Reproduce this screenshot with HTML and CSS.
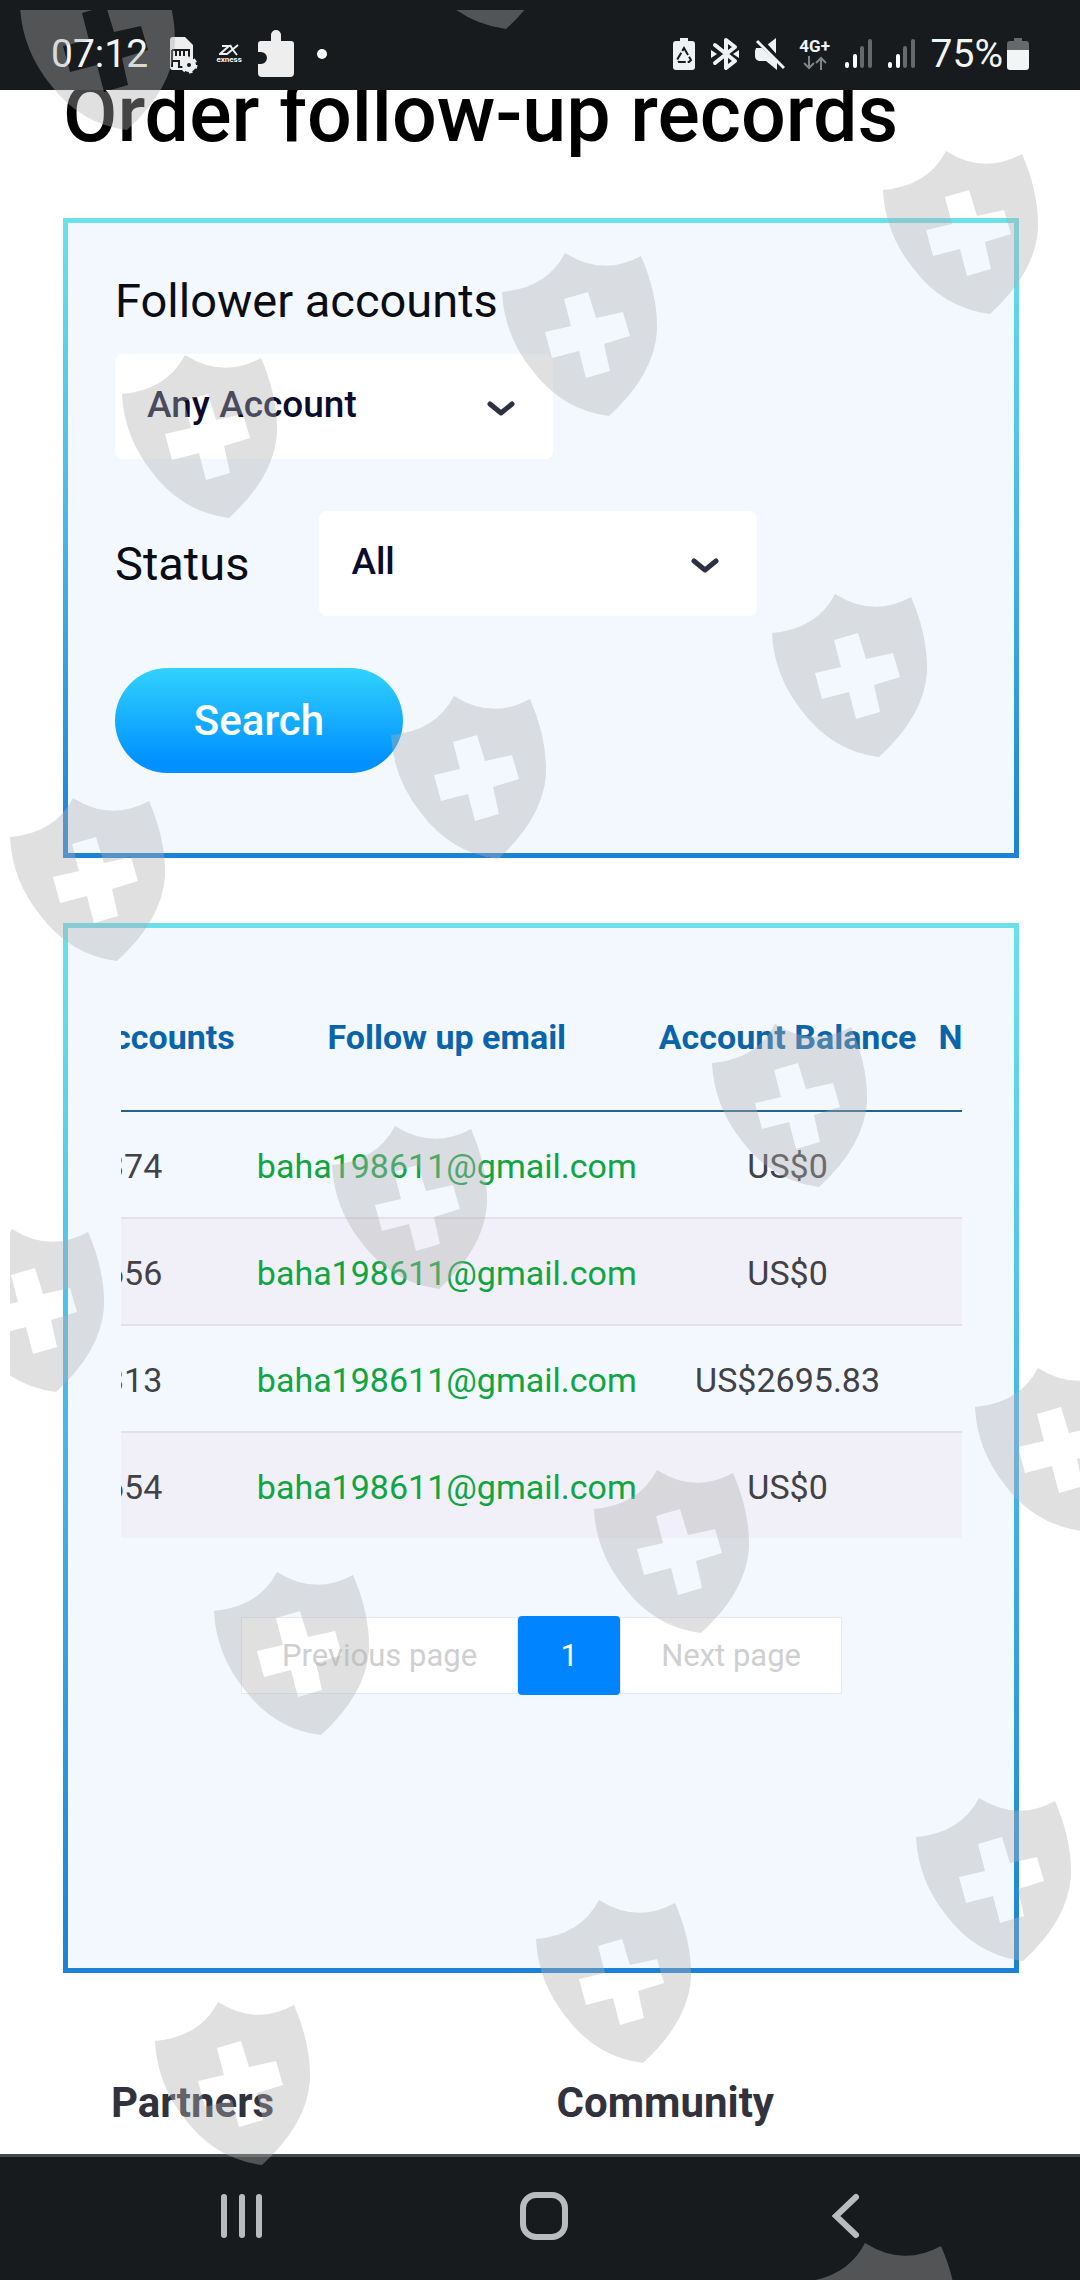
FILE: index.html
```html
<!DOCTYPE html>
<html lang="en">
<head>
    <meta charset="UTF-8">
    <meta name="viewport" content="width=device-width, initial-scale=1.0">
    <title>Order follow-up records</title>
    <link rel="stylesheet" href="styles.css">
</head>
<body>
<header class="status-bar">
    <div class="status-group">
        <span class="clock">07:12</span>
        <svg class="icon" width="36" height="48" viewBox="0 0 36 48">
            <path fill="#eee" d="M6 10q0-3 3-3h12l8 8v25H9q-3 0-3-3z"/>
            <path fill="none" stroke="#171b1e" stroke-width="2" d="M8 20h17v8M8 37V20M12 20v6M16 20v6M20 20v6M9 31h6v6h6"/>
            <g transform="translate(25 35)">
                <circle r="5" fill="none" stroke="#eee" stroke-width="4"/>
                <circle r="6" fill="none" stroke="#eee" stroke-width="5" stroke-dasharray="3 3.3"/>
                <circle r="2" fill="#171b1e"/>
            </g>
        </svg>
        <span class="exness">
            <svg width="20" height="12" viewBox="0 0 20 12"><path fill="none" stroke="#eee" stroke-width="2" d="M3 2h7L1 10h7L19 1M11 1l3 5 4 5"/></svg>
            exness
        </span>
        <svg class="icon" width="36" height="48" viewBox="0 0 36 48">
            <path fill="#eee" d="M3 11h10V5a5 5 0 0 1 10 0v6h10q3 0 3 3v29q0 4-4 4H4q-4 0-4-4V34h3a6 6 0 0 0 0-12H0v-8q0-3 3-3z"/>
        </svg>
        <svg class="icon" width="24" height="48" viewBox="0 0 24 48"><circle cx="12" cy="24" r="5" fill="#fff"/></svg>
    </div>
    <div class="status-group">
        <svg class="icon" width="22" height="48" viewBox="0 0 22 48">
            <path fill="#eef2f4" d="M7 8h8v3h4q3 0 3 3v23q0 3-3 3H3q-3 0-3-3V14q0-3 3-3h4z"/>
            <path fill="none" stroke="#171b1e" stroke-width="2" stroke-dasharray="8 2" d="M11 18l7 12-2 2H6l-2-2z"/>
        </svg>
        <svg class="icon" width="28" height="48" viewBox="0 0 28 48">
            <path fill="none" stroke="#eef2f4" stroke-width="4" stroke-linejoin="round" stroke-linecap="round" d="M4 15l20 16-9 7V10l9 7L4 33"/>
            <path fill="#eef2f4" d="M0 20l6 4-6 4zM28 20l-6 4 6 4z"/>
        </svg>
        <svg class="icon" width="30" height="48" viewBox="0 0 30 48">
            <path fill="#eef2f4" d="M1 18h6l15 14v8L11 31H4q-4-1-4-5v-5zM12 15l9-7v16z"/>
            <path stroke="#171b1e" stroke-width="3" d="M6 9l25 28"/>
            <path stroke="#eef2f4" stroke-width="3" d="M2 11l27 27"/>
        </svg>
        <span class="network">
            4G+
            <svg width="24" height="14" viewBox="0 0 24 14"><path fill="none" stroke="#7f8486" stroke-width="2" d="M6 0v12M1 7l5 5 5-5M18 14V2M13 7l5-5 5 5"/></svg>
        </span>
        <svg class="icon" width="27" height="48" viewBox="0 0 27 48" fill="none" stroke-width="4" stroke-linecap="round">
            <path stroke="#fff" d="M2 34v2M10 26v10"/><path stroke="#66696b" d="M17 18v18M25 11v25"/>
        </svg>
        <svg class="icon" width="27" height="48" viewBox="0 0 27 48" fill="none" stroke-width="4" stroke-linecap="round">
            <path stroke="#fff" d="M2 34v2M10 26v10"/><path stroke="#66696b" d="M17 18v18M25 11v25"/>
        </svg>
        <span class="battery">
            75%
            <svg width="22" height="48" viewBox="0 0 22 48">
                <path fill="#66696b" d="M7 8h8v3h4q3 0 3 3v8H0v-8q0-3 3-3h4z"/>
                <path fill="#f2f5f6" d="M0 20h22v17q0 3-3 3H3q-3 0-3-3z"/>
            </svg>
        </span>
    </div>
</header>

<main class="page">
    <h1>Order follow-up records</h1>

    <form class="panel filters">
        <div class="field">
            <label for="account">Follower accounts</label>
            <div class="select">
                <select id="account"><option>Any Account</option></select>
                <svg width="28" height="16" viewBox="0 0 28 16"><path d="M3 3l11 9 11-9"/></svg>
            </div>
        </div>
        <div class="field field-inline">
            <label for="status">Status</label>
            <div class="select">
                <select id="status"><option>All</option></select>
                <svg width="28" height="16" viewBox="0 0 28 16"><path d="M3 3l11 9 11-9"/></svg>
            </div>
        </div>
        <button type="button" class="search">Search</button>
    </form>

    <section class="panel records">
        <div class="table-scroll">
            <table>
                <thead>
                    <tr><th>Follower accounts</th><th>Follow up email</th><th>Account Balance</th><th>Net worth</th></tr>
                </thead>
                <tbody>
                    <tr><td>2104374</td><td class="email">baha198611@gmail.com</td><td>US$0</td><td></td></tr>
                    <tr><td>2104656</td><td class="email">baha198611@gmail.com</td><td>US$0</td><td></td></tr>
                    <tr><td>2104313</td><td class="email">baha198611@gmail.com</td><td>US$2695.83</td><td></td></tr>
                    <tr><td>2104654</td><td class="email">baha198611@gmail.com</td><td>US$0</td><td></td></tr>
                </tbody>
            </table>
        </div>
        <nav class="pagination">
            <button type="button" disabled>Previous page</button>
            <button type="button" class="current">1</button>
            <button type="button" disabled>Next page</button>
        </nav>
    </section>

    <footer class="footer">
        <h2>Partners</h2>
        <h2>Community</h2>
    </footer>
</main>

<nav class="nav-bar">
    <button type="button" aria-label="Recents"><svg width="48" height="48" viewBox="0 0 48 48"><path d="M6 5v38M24 5v38M41 5v38"/></svg></button>
    <button type="button" aria-label="Home"><svg width="48" height="48" viewBox="0 0 48 48"><rect x="3" y="3" width="42" height="42" rx="13"/></svg></button>
    <button type="button" aria-label="Back"><svg width="48" height="48" viewBox="0 0 48 48"><path d="M34 5L14 24l20 19"/></svg></button>
</nav>

<!-- shield watermark over the whole screen -->
<svg class="watermark" aria-hidden="true">
    <defs>
        <path id="shield" fill-rule="evenodd" d="M0 39Q45 35 63 0Q101 24 139 3Q156 42 155 78Q152 122 107 163Q60 157 30 117Q2 82 0 39z
            M62 46L86 39L94 65L121 59L128 83L102 91L108 118L84 125L77 98L50 105L43 79L69 73z"/>
    </defs>
    <use href="#shield" x="10" y="-43"/>
    <use href="#shield" x="389" y="-144"/>
    <use href="#shield" x="873" y="141"/>
    <use href="#shield" x="492" y="243"/>
    <use href="#shield" x="112" y="345"/>
    <use href="#shield" x="762" y="584"/>
    <use href="#shield" x="381" y="686"/>
    <use href="#shield" x="0" y="788"/>
    <use href="#shield" x="702" y="1014"/>
    <use href="#shield" x="322" y="1116"/>
    <use href="#shield" x="-61" y="1219"/>
    <use href="#shield" x="965" y="1358"/>
    <use href="#shield" x="584" y="1460"/>
    <use href="#shield" x="204" y="1562"/>
    <use href="#shield" x="906" y="1788"/>
    <use href="#shield" x="526" y="1890"/>
    <use href="#shield" x="145" y="1992"/>
    <use href="#shield" x="792" y="2233"/>
</svg>
</body>
</html>
```

FILE: styles.css
```css
* {
    box-sizing: border-box;
}

body {
    position: relative;
    display: flex;
    flex-direction: column;
    min-height: 100vh;
    margin: 0;
    background-color: #fff;
    color: #0b0d14;
    font-family: Roboto, "Liberation Sans", sans-serif;
}

button, select {
    font-family: inherit;
    border: none;
}

svg {
    display: block;
    flex-shrink: 0;
}

.status-bar {
    display: flex;
    justify-content: space-between;
    align-items: center;
    height: 90px;
    padding: 18px 51px 0;
    background-color: #171b1e;
    color: #f2f5f6;
    font-size: 39px;
    line-height: 48px;
}

.status-group {
    display: flex;
    align-items: center;
    gap: 16px;
}

.exness {
    display: flex;
    flex-direction: column;
    align-items: center;
    width: 26px;
    font-size: 8px;
    font-weight: bold;
    line-height: 8px;
}

.network {
    display: flex;
    flex-direction: column;
    align-items: center;
    gap: 2px;
    width: 28px;
    font-size: 17px;
    font-weight: bold;
    line-height: 16px;
}

.battery {
    display: flex;
    gap: 4px;
}

.page {
    flex: 1;
    overflow: hidden;
}

h1 {
    margin: -23px 63px 57px;
    color: #000;
    font-size: 79px;
    font-weight: 500;
    line-height: 94px;
    white-space: nowrap;
}

.panel {
    margin: 0 61px 65px 63px;
    border: 5px solid #45aee4;
    border-image: linear-gradient(#6be0ea, #48b4ea 50%, #1b82d6) 1;
    background-color: #f3f8ff;
}

.filters {
    display: flex;
    flex-direction: column;
    align-items: flex-start;
    gap: 52px;
    padding: 50px 47px 80px;
}

.field {
    display: flex;
    flex-direction: column;
    gap: 25px;
    font-size: 47px;
    line-height: 56px;
}

.field-inline {
    flex-direction: row;
    align-items: center;
    gap: 70px;
}

.select {
    position: relative;
    width: 438px;
}

.select select {
    display: block;
    width: 100%;
    height: 105px;
    padding: 0 32px 4px;
    border-radius: 8px;
    background-color: #fff;
    color: #0b0b2c;
    font-size: 37px;
    font-weight: 500;
    appearance: none;
}

.select svg {
    position: absolute;
    top: 47px;
    right: 38px;
    fill: none;
    stroke: #2d2f42;
    stroke-width: 5;
    stroke-linecap: round;
    stroke-linejoin: round;
    pointer-events: none;
}

.search {
    width: 288px;
    height: 105px;
    border-radius: 53px;
    background: linear-gradient(#31d2ff, #0090ff 90%);
    color: #fff;
    font-size: 42px;
    font-weight: 500;
}

.records {
    margin-bottom: 106px;
    padding: 36px 52px 273px 53px;
}

.table-scroll {
    overflow: hidden;
}

/* scrolled sideways, first column is partly out of view */
table {
    margin-left: -176px;
    border-collapse: collapse;
    color: #414146;
    font-size: 34px;
    line-height: 40px;
    white-space: nowrap;
}

th, td {
    padding: 34px 11px 31px;
    border-bottom: 2px solid #e3e0ea;
    text-align: center;
}

th {
    padding: 53px 11px;
    border-bottom-color: #22648c;
    color: #0a64ab;
    font-weight: bold;
}

tbody tr:nth-child(even) {
    background-color: #f1f0f9;
}

tbody tr:last-child td {
    border-bottom: none;
}

.email {
    color: #0fa541;
}

.pagination {
    display: flex;
    justify-content: center;
    align-items: center;
    margin-top: 78px;
}

.pagination button {
    height: 77px;
    padding: 0 40px;
    border: 1px solid #e6e8ec;
    background-color: #fff;
    color: #cfcfcf;
    font-size: 31px;
}

.pagination .current {
    width: 102px;
    height: 79px;
    border: none;
    border-radius: 4px;
    background-color: #0084ff;
    color: #fff;
}

.footer {
    display: grid;
    grid-template-columns: 1fr 1fr;
    padding: 0 78px 27px 111px;
}

.footer h2 {
    margin: 0;
    color: #32323f;
    font-size: 42px;
    font-weight: bold;
    line-height: 48px;
}

.nav-bar {
    display: flex;
    justify-content: center;
    align-items: center;
    gap: 254px;
    height: 126px;
    padding-left: 8px;
    padding-bottom: 6px;
    border-top: 3px solid #434a48;
    background-color: #171b1e;
}

.nav-bar button {
    padding: 0;
    background: none;
}

.nav-bar svg {
    fill: none;
    stroke: #b8bcbe;
    stroke-width: 6;
    stroke-linecap: round;
}

.watermark {
    position: absolute;
    top: 10px;
    left: 10px;
    width: calc(100% - 10px);
    height: calc(100% - 10px);
    overflow: hidden;
    fill: rgba(176, 176, 176, 0.39);
    pointer-events: none;
}
```
